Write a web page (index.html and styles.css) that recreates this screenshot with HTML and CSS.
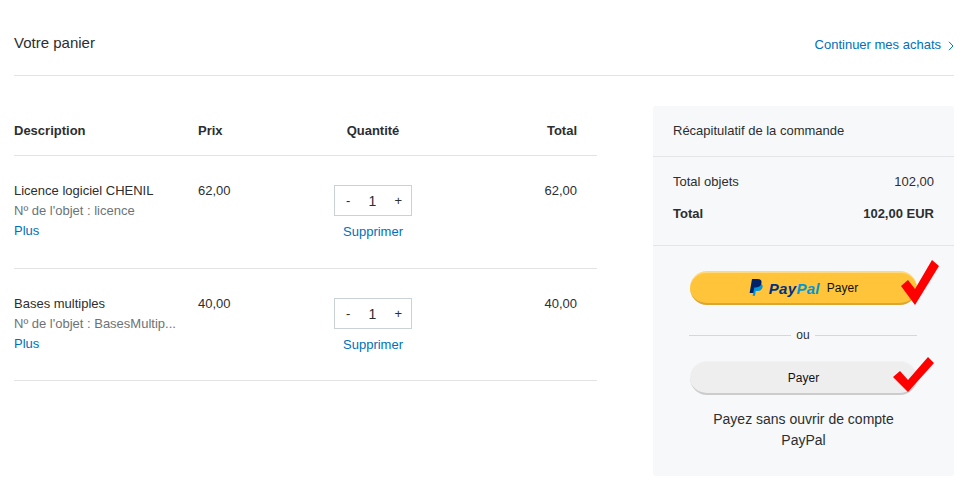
FILE: index.html
```html
<!DOCTYPE html>
<html lang="fr">
<head>
<meta charset="UTF-8">
<title>Votre panier</title>
<link rel="stylesheet" href="styles.css">
</head>
<body>
<div class="cart-header">
	<div class="cart-title">Votre panier</div>
	<a class="continue" href="#">Continuer mes achats
		<svg class="chevron" width="6" height="10" viewBox="0 0 6 10"><path d="M1 .8 5 5 1 9.200" fill="none" stroke="#0070ba" stroke-width="1"/></svg>
	</a>
</div>

<div class="cart-body">
	<div class="items">
		<div class="row head">
			<div>Description</div>
			<div>Prix</div>
			<div class="center">Quantité</div>
			<div class="right">Total</div>
		</div>

		<div class="row item">
			<div>
				<div class="name">Licence logiciel CHENIL</div>
				<div class="ref">Nº de l'objet : licence</div>
				<a class="link" href="#">Plus</a>
			</div>
			<div>62,00</div>
			<div class="qty-cell">
				<div class="qty"><span>-</span><span class="num">1</span><span>+</span></div>
				<a class="link" href="#">Supprimer</a>
			</div>
			<div class="right">62,00</div>
		</div>

		<div class="row item">
			<div>
				<div class="name">Bases multiples</div>
				<div class="ref">Nº de l'objet : BasesMultip...</div>
				<a class="link" href="#">Plus</a>
			</div>
			<div>40,00</div>
			<div class="qty-cell">
				<div class="qty"><span>-</span><span class="num">1</span><span>+</span></div>
				<a class="link" href="#">Supprimer</a>
			</div>
			<div class="right">40,00</div>
		</div>
	</div>

	<div class="summary">
		<div class="summary-title">Récapitulatif de la commande</div>
		<div class="totals">
			<div class="line"><span>Total objets</span><span>102,00</span></div>
			<div class="line strong"><span>Total</span><span>102,00 EUR</span></div>
		</div>
		<div class="pay">
			<div class="btn-wrap">
				<div class="btn paypal">
					<svg class="pp-mark" width="15" height="18" viewBox="0 0 15 18">
						<path d="M4 15.500 5.800 4.500H10c2.600 0 4 1.300 3.600 3.500-.5 2.700-2.400 4-5 4H6.700L6 16.800H3.500z" fill="#0096d9"/>
						<path d="M3 0h5.500c3 0 4.500 1.400 4 4-.5 2.900-2.500 4.400-5.500 4.400H5.300L4.400 14H.6z" fill="#012169"/>
					</svg>
					<span class="pp-word">Pay<span class="pp-light">Pal</span></span>
					<span class="pp-label">Payer</span>
				</div>
				<svg class="check check-one" width="38" height="45" viewBox="0 0 38 45"><path d="M0 26 7 20 14 29 31 0 38 6 14 45z" fill="#ff0000"/></svg>
			</div>
			<div class="sep"><span>ou</span></div>
			<div class="btn-wrap">
				<div class="btn plain">Payer</div>
				<svg class="check check-two" width="41" height="35" viewBox="0 0 41 35"><path d="M0 20 7 14 15 23 35 0 41 6 15 35z" fill="#ff0000"/></svg>
			</div>
			<div class="note">Payez sans ouvrir de compte PayPal</div>
		</div>
	</div>
</div>
</body>
</html>
```

FILE: styles.css
```css
html, body { margin: 0; padding: 0; }
body { font-family: "Liberation Sans", Arial, sans-serif; font-size: 13px; color: #2c2e2f; background: #fff; height: 480px; overflow: hidden; }

a { text-decoration: none; }
.link { color: #0070ba; }

.cart-header { margin: 0 25px 0 14px; height: 75px; border-bottom: 1px solid #e3e3e3; display: flex; justify-content: space-between; }
.cart-title { font-size: 15px; padding-top: 34px; }
.continue { color: #0070ba; padding-top: 37px; display: flex; align-items: flex-start; gap: 7px; }
.chevron { margin-top: 4px; }

.cart-body { display: flex; justify-content: space-between; margin: 30px 25px 0 14px; }

.items { width: 583px; }
.row { display: grid; grid-template-columns: 184px 100px 150px 129px; padding-right: 20px; border-bottom: 1px solid #e3e3e3; }
.head { height: 49px; font-weight: bold; align-items: center; }
.item { height: 112px; padding-top: 28px; box-sizing: border-box; line-height: 14px; }
.item:nth-child(2) { height: 113px; }
.center { text-align: center; }
.right { text-align: right; }

.name { margin-bottom: 6px; }
.ref { color: #6c7378; margin-bottom: 6px; }

.qty-cell { display: flex; flex-direction: column; align-items: center; padding-top: 1px; }
.qty { height: 29px; border: 1px solid #cbd2d6; display: flex; justify-content: space-between; align-items: center; padding: 0 9px 0 11px; margin-bottom: 9px; width: 56px; }
.num { font-size: 14px; }

.summary { width: 301px; height: 370px; background: #f7f8fa; border-radius: 3px; }
.summary-title { height: 50px; line-height: 49px; padding-left: 20px; border-bottom: 1px solid #e3e5e8; }
.totals { height: 89px; padding: 18px 20px 0; box-sizing: border-box; border-bottom: 1px solid #e3e5e8; }
.line { display: flex; justify-content: space-between; margin-bottom: 18px; line-height: 14px; }
.strong { font-weight: bold; }

.pay { padding: 25px 37px 0; font-size: 12px; }
.btn-wrap { position: relative; }
.btn { height: 34px; border-radius: 17px; display: flex; align-items: center; justify-content: center; box-sizing: border-box; }
.paypal { background: #ffc439; border-top: 2px solid #ffd97f; border-bottom: 2px solid #d9a733; color: #111; }
.plain { background: #eee; border-top: 1px solid #f2f2f2; border-bottom: 2px solid #ccc; color: #111; }

.pp-mark { margin-right: 5px; }
.pp-word { font-size: 15px; font-weight: bold; font-style: italic; color: #003087; margin-right: 7px; letter-spacing: .3px; }
.pp-light { color: #0096d9; }

.check { position: absolute; }
.check-one { right: -22px; top: -11px; }
.check-two { right: -17px; top: -4px; }

.sep { display: flex; align-items: center; gap: 5px; margin: 22px 0 18px -1px; }
.sep span { line-height: 16px; }
.sep::before, .sep::after { content: ""; flex: 1; border-top: 1px solid #d5d8db; }

.note { font-size: 14px; line-height: 21px; text-align: center; margin: 14px 0 0; color: #2c2e2f; padding: 0 20px; }
```
